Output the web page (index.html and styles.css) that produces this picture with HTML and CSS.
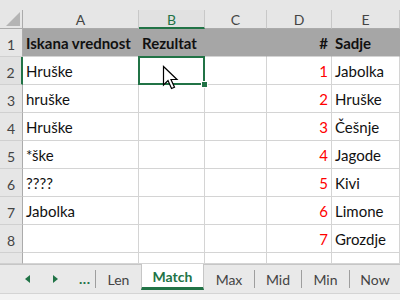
FILE: index.html
```html
<!DOCTYPE html>
<html lang="sl">
<head>
  <meta charset="UTF-8">
  <title>Match</title>
  <link rel="stylesheet" href="styles.css">
</head>
<body>
  <div class="sheet">
    <div class="topstrip"></div>

    <div class="grid">
      <div class="corner">
        <svg width="14" height="14" viewBox="0 0 14 14"><polygon points="14,0 14,14 0,14" fill="#b4b4b4"/></svg>
      </div>
      <div class="colhead">A</div>
      <div class="colhead active">B</div>
      <div class="colhead">C</div>
      <div class="colhead">D</div>
      <div class="colhead">E</div>

      <div class="rowhead">1</div>
      <div class="cell head">Iskana vrednost</div>
      <div class="cell head">Rezultat</div>
      <div class="cell head"></div>
      <div class="cell head num">#</div>
      <div class="cell head">Sadje</div>

      <div class="rowhead active">2</div>
      <div class="cell">Hruške</div>
      <div class="cell selected"></div>
      <div class="cell"></div>
      <div class="cell num red">1</div>
      <div class="cell">Jabolka</div>

      <div class="rowhead">3</div>
      <div class="cell">hruške</div>
      <div class="cell"></div>
      <div class="cell"></div>
      <div class="cell num red">2</div>
      <div class="cell">Hruške</div>

      <div class="rowhead">4</div>
      <div class="cell">Hruške</div>
      <div class="cell"></div>
      <div class="cell"></div>
      <div class="cell num red">3</div>
      <div class="cell">Češnje</div>

      <div class="rowhead">5</div>
      <div class="cell">*ške</div>
      <div class="cell"></div>
      <div class="cell"></div>
      <div class="cell num red">4</div>
      <div class="cell">Jagode</div>

      <div class="rowhead">6</div>
      <div class="cell">????</div>
      <div class="cell"></div>
      <div class="cell"></div>
      <div class="cell num red">5</div>
      <div class="cell">Kivi</div>

      <div class="rowhead">7</div>
      <div class="cell">Jabolka</div>
      <div class="cell"></div>
      <div class="cell"></div>
      <div class="cell num red">6</div>
      <div class="cell">Limone</div>

      <div class="rowhead">8</div>
      <div class="cell"></div>
      <div class="cell"></div>
      <div class="cell"></div>
      <div class="cell num red">7</div>
      <div class="cell">Grozdje</div>

      <div class="rowhead part"></div>
      <div class="cell part"></div>
      <div class="cell part"></div>
      <div class="cell part"></div>
      <div class="cell part"></div>
      <div class="cell part"></div>
    </div>

    <svg class="pointer" width="18" height="26" viewBox="0 0 18 26">
      <path d="M1.5 1.5 L1.5 20 L6 15.5 L9.5 23.5 L12.5 22.2 L9 14.5 L15 14.5 Z" fill="#fff" stroke="#000" stroke-width="1.2" stroke-linejoin="miter"/>
    </svg>

    <div class="tabbar">
      <div class="nav">
        <svg class="arrow left" width="5" height="8" viewBox="0 0 5 8"><polygon points="5,0 5,8 0,4" fill="#217346"/></svg>
        <svg class="arrow right" width="5" height="8" viewBox="0 0 5 8"><polygon points="0,0 0,8 5,4" fill="#217346"/></svg>
        <span class="more">...</span>
      </div>
      <span class="sep"></span>
      <div class="tab w45">Len</div>
      <div class="tab current">Match</div>
      <div class="tab w50">Max</div>
      <span class="sep"></span>
      <div class="tab w46">Mid</div>
      <span class="sep"></span>
      <div class="tab w47">Min</div>
      <span class="sep"></span>
      <div class="tab w50">Now</div>
    </div>
    <div class="status"></div>
  </div>
</body>
</html>
```

FILE: styles.css
```css
body {
  margin: 0;
  font-family: Lato, "Open Sans", sans-serif;
  background-color: #fff;
}

.sheet {
  position: relative;
  width: 400px;
  height: 300px;
  overflow: hidden;
}

.topstrip {
  height: 10px;
  background-color: #e6e6e6;
}

.grid {
  display: grid;
  grid-template-columns: 23px 116px 66px 62px 65px 68px;
  grid-template-rows: 19px repeat(8, 28px) 11px;
}

.grid > div {
  box-sizing: border-box;
}

.corner {
  background-color: #e6e6e6;
  border-right: 1px solid #ababab;
  border-bottom: 1px solid #ababab;
  display: flex;
  align-items: flex-end;
  justify-content: flex-end;
  padding: 0 2px 2px 0;
}

.colhead {
  background-color: #e6e6e6;
  border-right: 1px solid #c8c8c8;
  border-bottom: 1px solid #ababab;
  color: #444;
  font-size: 14px;
  display: flex;
  align-items: center;
  justify-content: center;
  padding-top: 1px;
}

.colhead.active {
  color: #217346;
  border-bottom: 2px solid #217346;
  background-color: #e1e1e1;
}

.rowhead {
  background-color: #e6e6e6;
  border-right: 1px solid #ababab;
  border-bottom: 1px solid #d0d0d0;
  color: #444;
  font-size: 14px;
  display: flex;
  align-items: flex-end;
  justify-content: center;
  padding-bottom: 3px;
}

.rowhead.active {
  border-right: 2px solid #217346;
  background-color: #e1e1e1;
}

.cell {
  border-right: 1px solid #d4d4d4;
  border-bottom: 1px solid #d4d4d4;
  font-size: 15px;
  color: #111;
  padding: 0 3px 4px 3px;
  display: flex;
  align-items: flex-end;
  white-space: nowrap;
}

.cell.head {
  background-color: #a6a6a6;
  border-right-color: #a6a6a6;
  font-weight: bold;
}

.cell.num {
  justify-content: flex-end;
}

.cell.red {
  color: #ff0000;
}

.cell.selected {
  position: relative;
}

.cell.selected::after {
  content: "";
  position: absolute;
  left: -1px;
  top: -1px;
  right: -1px;
  bottom: -1px;
  border: 2px solid #217346;
}

.cell.selected::before {
  content: "";
  position: absolute;
  right: -4px;
  bottom: -4px;
  width: 5px;
  height: 5px;
  background-color: #217346;
  border: 1px solid #fff;
  z-index: 2;
}

.pointer {
  position: absolute;
  left: 162px;
  top: 65px;
}

.tabbar {
  height: 29px;
  box-sizing: border-box;
  background-color: #e9e9e9;
  border-top: 1px solid #c6c6c6;
  display: flex;
  align-items: center;
  font-size: 14px;
  color: #444;
}

.nav {
  width: 98px;
  height: 100%;
  position: relative;
}

.arrow {
  position: absolute;
  top: 10px;
}

.arrow.left {
  left: 25px;
}

.arrow.right {
  left: 53px;
}

.more {
  position: absolute;
  left: 79px;
  top: 5px;
  color: #217346;
  font-weight: bold;
  font-size: 14px;
  letter-spacing: 0.5px;
}

.sep {
  width: 1px;
  height: 18px;
  background-color: #9e9e9e;
  flex: 0 0 auto;
}

.tab {
  height: 100%;
  display: flex;
  align-items: center;
  justify-content: center;
  box-sizing: border-box;
  flex: 0 0 auto;
}

.w45 { width: 45px; }
.w46 { width: 46px; }
.w47 { width: 47px; }
.w50 { width: 50px; }

.tab.current {
  width: 63px;
  background-color: #fff;
  border-left: 1px solid #c6c6c6;
  border-right: 1px solid #c6c6c6;
  border-bottom: 3px solid #217346;
  margin-top: -1px;
  height: 26px;
  align-self: flex-start;
  color: #217346;
  font-weight: bold;
  padding-top: 2px;
}

.status {
  height: 7px;
  background-color: #f3f3f3;
  border-top: 1px solid #d4d4d4;
}
```
